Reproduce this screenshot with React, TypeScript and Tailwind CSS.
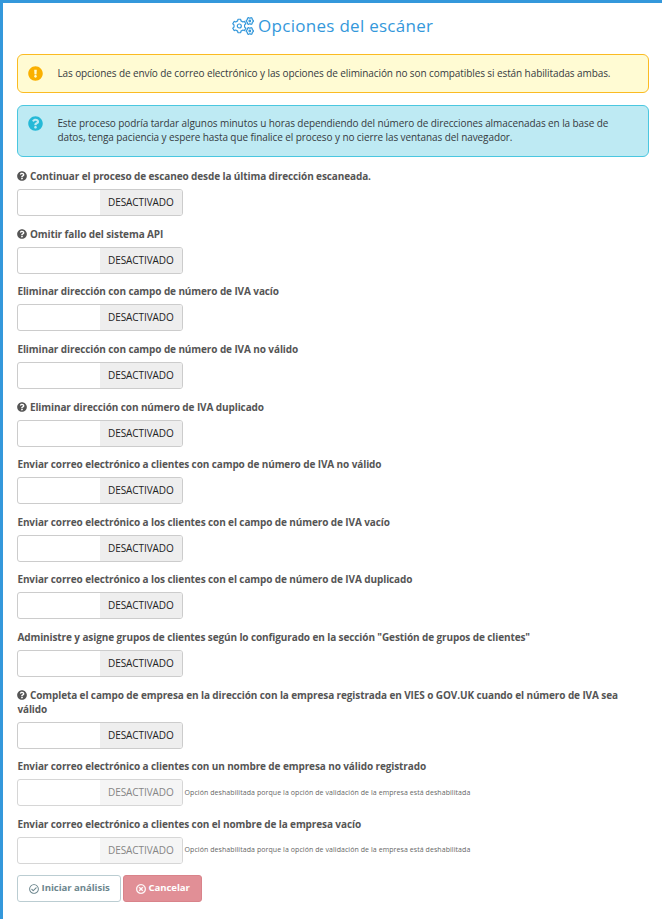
import { FaExclamationCircle, FaQuestionCircle, FaRegCheckCircle, FaRegTimesCircle } from "react-icons/fa";

type Option = { label: string; help?: boolean; note?: boolean };

const OPTIONS: Option[] = [
  { label: "Continuar el proceso de escaneo desde la última dirección escaneada.", help: true },
  { label: "Omitir fallo del sistema API", help: true },
  { label: "Eliminar dirección con campo de número de IVA vacío" },
  { label: "Eliminar dirección con campo de número de IVA no válido" },
  { label: "Eliminar dirección con número de IVA duplicado", help: true },
  { label: "Enviar correo electrónico a clientes con campo de número de IVA no válido" },
  { label: "Enviar correo electrónico a los clientes con el campo de número de IVA vacío" },
  { label: "Enviar correo electrónico a los clientes con el campo de número de IVA duplicado" },
  { label: 'Administre y asigne grupos de clientes según lo configurado en la sección "Gestión de grupos de clientes"' },
  { label: "Completa el campo de empresa en la dirección con la empresa registrada en VIES o GOV.UK cuando el número de IVA sea válido", help: true },
  { label: "Enviar correo electrónico a clientes con un nombre de empresa no válido registrado", note: true },
  { label: "Enviar correo electrónico a clientes con el nombre de la empresa vacío", note: true },
];

// Outline of a toothed wheel centred on (cx, cy)
function gear(cx: number, cy: number, outer: number, inner: number, teeth: number, turn = 0) {
  const step = (Math.PI * 2) / teeth;
  const points: string[] = [];
  for (let i = 0; i < teeth; i++) {
    const a = i * step + turn;
    const corners: [number, number][] = [[-0.3, inner], [-0.19, outer], [0.19, outer], [0.3, inner]];
    for (const [f, r] of corners) {
      points.push(`${(cx + Math.cos(a + f * step) * r).toFixed(2)} ${(cy + Math.sin(a + f * step) * r).toFixed(2)}`);
    }
  }
  return `M${points.join("L")}Z`;
}

function Cogs() {
  return (
    <svg viewBox="0 0 22 18" className="h-[18px] w-[22px] shrink-0" fill="none" stroke="currentColor" strokeWidth="1.2" strokeLinejoin="round">
      <path d={gear(7.3, 9, 6.9, 5.4, 6, Math.PI / 6)} />
      <circle cx="7.3" cy="9" r="2" />
      <path d={gear(17.8, 4, 3.6, 3, 6)} />
      <circle cx="17.8" cy="4" r="0.8" />
      <path d={gear(17.8, 14, 3.6, 3, 6)} />
      <circle cx="17.8" cy="14" r="0.8" />
    </svg>
  );
}

function Switch({ disabled }: { disabled?: boolean }) {
  return (
    <div className={`flex h-[27px] w-[166px] shrink-0 overflow-hidden rounded-[3px] border bg-white ${disabled ? "border-[#d6d6d6]" : "border-[#ccc]"}`}>
      <span className="w-[82px]" />
      <span className={`flex flex-1 items-center justify-center pr-px text-[10px] tracking-[-0.08px] ${disabled ? "bg-[#f5f5f5] text-[#858585]" : "bg-[#eee] text-[#222]"}`}>DESACTIVADO</span>
    </div>
  );
}

export default function App() {
  return (
    <main className="h-[919px] w-[662px] overflow-hidden border-t-[3px] border-l-[3px] border-[#3498db] bg-white pr-[13px] pl-[14.4px] font-['Open_Sans',sans-serif]">
      <h1 className="flex h-[46px] items-center justify-center gap-1 pr-px text-[17px] text-[#3498db]">
        <Cogs />
        <span className="tracking-[0.28px]">Opciones del escáner</span>
      </h1>
      <div className="mt-[5px] flex h-[39px] rounded-[6px] border-[1.5px] border-[#fbbb22] bg-[#fffbd3] pt-[11px] pl-[10px] text-[10px] leading-[14px] tracking-[-0.093px] text-[#363a41]">
        <FaExclamationCircle className="mr-[14px] size-[15px] shrink-0 text-[#fab000]" />
        <p>Las opciones de envío de correo electrónico y las opciones de eliminación no son compatibles si están habilitadas ambas.</p>
      </div>
      <div className="mt-[12px] flex h-[52px] rounded-[6px] border-[1.5px] border-[#4ac7e0] bg-[#beeaf3] pt-[10px] pl-[10px] text-[10px] leading-[14px] tracking-[-0.093px] text-[#363a41]">
        <FaQuestionCircle className="mr-[14px] size-[15px] shrink-0 text-[#25b9d7]" />
        <p>Este proceso podría tardar algunos minutos u horas dependiendo del número de direcciones almacenadas en la base de<br />datos, tenga paciencia y espere hasta que finalice el proceso y no cierre las ventanas del navegador.</p>
      </div>
      <div className="mt-[12px] flex flex-col gap-[10.64px]">
        {OPTIONS.map((o) => (
          <section key={o.label}>
            <h2 className="text-[10px] leading-[14px] font-bold tracking-[-0.103px] text-[#555]">
              {o.help && <FaQuestionCircle className="mr-[2.5px] inline size-[10px] align-[-1px]" />}
              {o.label}
            </h2>
            <div className="mt-[6px] flex items-center gap-[1.2px]">
              <Switch disabled={o.note} />
              {o.note && <small className="text-[7px] tracking-[0.07px] text-[#666]">Opción deshabilitada porque la opción de validación de la empresa está deshabilitada</small>}
            </div>
          </section>
        ))}
      </div>
      <div className="mt-[11.2px] flex gap-[2px] text-[9.6px] font-bold tracking-[-0.06px]">
        <button className="flex h-[27px] w-[104px] items-center justify-center gap-[2.5px] rounded-[3px] border border-[#bbcdd2] text-[#6c868e]">
          <FaRegCheckCircle className="size-[10px]" />Iniciar análisis
        </button>
        <button className="flex h-[27px] w-[79px] items-center justify-center gap-[2.5px] rounded-[3px] border border-[#d9838a] bg-[#e18f96] text-white">
          <FaRegTimesCircle className="size-[10px]" stroke="currentColor" strokeWidth="16" />Cancelar
        </button>
      </div>
    </main>
  );
}
